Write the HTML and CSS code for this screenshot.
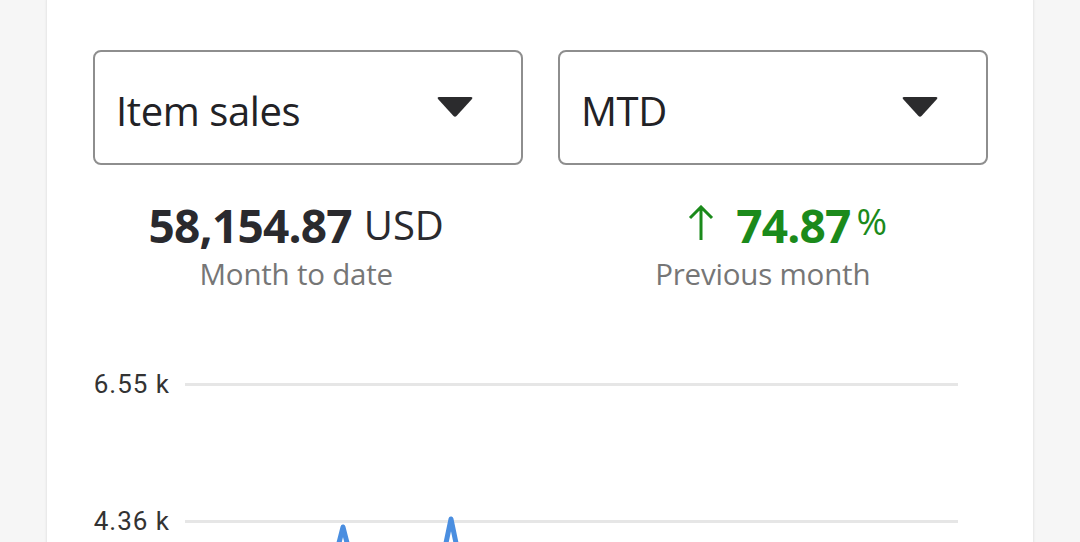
FILE: index.html
```html
<!DOCTYPE html>
<html>
<head>
<meta charset="utf-8">
<link rel="stylesheet" href="styles.css">
</head>
<body>
<div class="card">
  <div class="selects">
    <div class="select">
      <span class="select-label">Item sales</span>
      <svg class="caret" width="36" height="22" viewBox="0 0 36 22"><path d="M2 1 H34 Q36 1 35 3 L19.5 20 Q18 21.5 16.5 20 L1 3 Q0 1 2 1 Z" fill="#2b2b2d"/></svg>
    </div>
    <div class="select">
      <span class="select-label">MTD</span>
      <svg class="caret" width="36" height="22" viewBox="0 0 36 22"><path d="M2 1 H34 Q36 1 35 3 L19.5 20 Q18 21.5 16.5 20 L1 3 Q0 1 2 1 Z" fill="#2b2b2d"/></svg>
    </div>
  </div>
  <div class="stats">
    <div class="stat stat-left">
      <div class="stat-value"><b>58,154.87</b> <span class="unit">USD</span></div>
      <div class="stat-label">Month to date</div>
    </div>
    <div class="stat stat-right">
      <div class="stat-value green">
        <svg class="arrow" width="26" height="36" viewBox="0 0 26 36"><path d="M13 35 V2 M2 13 L13 2 L24 13" fill="none" stroke="#1b8a1b" stroke-width="3"/></svg>
        <b>74.87</b><span class="pct">%</span>
      </div>
      <div class="stat-label">Previous month</div>
    </div>
  </div>
  <div class="chart">
    <div class="grid-row">
      <span class="axis-label">6.55 k</span>
      <span class="grid-line"></span>
    </div>
    <div class="grid-row">
      <span class="axis-label">4.36 k</span>
      <span class="grid-line"></span>
    </div>
    <svg class="series" width="800" height="60" viewBox="0 0 800 60">
      <polyline points="83,80 98,21 113,80" fill="none" stroke="#4a8ee0" stroke-width="5" stroke-linejoin="round"/>
      <polyline points="192,80 206,13 220,80" fill="none" stroke="#4a8ee0" stroke-width="5" stroke-linejoin="round"/>
    </svg>
  </div>
</div>
</body>
</html>
```
FILE: styles.css
```css
html, body {
  margin: 0;
  padding: 0;
}
body {
  background: #f6f6f6;
  font-family: "Open Sans", "Noto Sans", sans-serif;
  color: #222226;
  height: 542px;
  overflow: hidden;
}
.card {
  margin: -14px 47px 0 47px;
  background: #ffffff;
  border-radius: 14px;
  box-shadow: 0 0 3px rgba(0, 0, 0, 0.14);
  padding: 64px 45px 40px 46px;
  height: 700px;
  box-sizing: border-box;
}
.selects {
  display: flex;
  gap: 35px;
}
.select {
  flex: 1;
  height: 115px;
  box-sizing: border-box;
  border: 2px solid #8e8e8e;
  border-radius: 8px;
  display: flex;
  align-items: center;
  justify-content: space-between;
  padding: 0 48px 0 21px;
}
.select-label {
  font-size: 40px;
  letter-spacing: -0.4px;
  color: #222226;
  margin-top: 6px;
}
.caret {
  display: block;
  margin-top: -2px;
}
.stats {
  display: flex;
  margin-top: 33px;
}
.stat {
  flex: 1;
  display: flex;
  flex-direction: column;
  align-items: center;
}
.stat-left {
  padding-right: 60px;
}
.stat-right {
  padding-right: 22px;
}
.stat-value {
  font-size: 46px;
  line-height: 54px;
  white-space: nowrap;
  color: #2a2a2e;
  display: flex;
  align-items: center;
}
.stat-value b {
  font-weight: 700;
  letter-spacing: -0.8px;
}
.unit {
  font-size: 40px;
  font-weight: 400;
  margin-left: 12px;
}
.green {
  color: #1b8a1b;
  padding-left: 50px;
}
.arrow {
  display: block;
  margin-right: 22px;
  margin-top: -4px;
}
.pct {
  font-size: 37px;
  font-weight: 400;
  margin-left: 6px;
  margin-top: -8px;
}
.stat-label {
  font-size: 29.5px;
  line-height: 36px;
  color: #767676;
  letter-spacing: -0.2px;
  margin-top: 4px;
}
.chart {
  position: relative;
  margin-top: 77px;
  display: flex;
  flex-direction: column;
  gap: 107px;
}
.grid-row {
  display: flex;
  align-items: center;
  gap: 15px;
  height: 30px;
}
.axis-label {
  width: 77px;
  text-align: right;
  font-family: Roboto, "Noto Sans", sans-serif;
  font-size: 26px;
  letter-spacing: 1px;
  color: #333333;
}
.grid-line {
  flex: 1;
  height: 3px;
  background: #e6e6e6;
  margin-right: 30px;
}
.series {
  position: absolute;
  left: 152px;
  top: 137px;
  overflow: visible;
}
```
